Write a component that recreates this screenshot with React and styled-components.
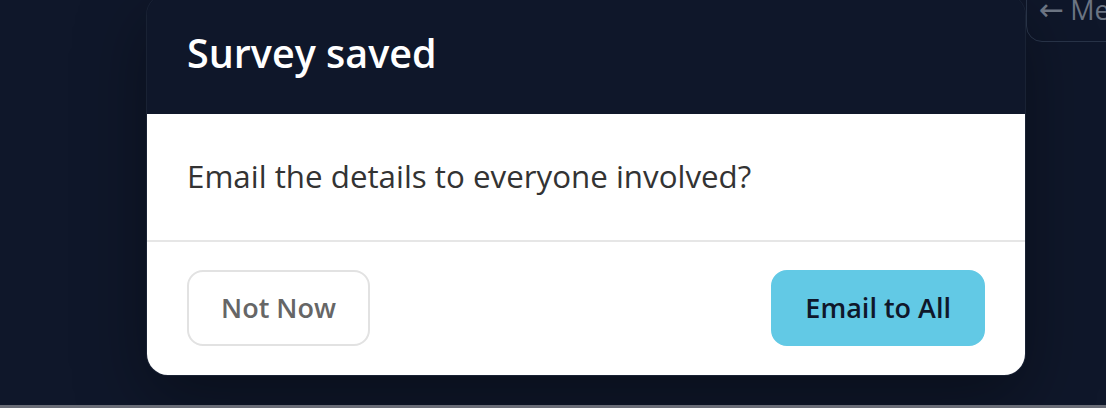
import React from "react";
import styled, { createGlobalStyle } from "styled-components";

const GlobalStyle = createGlobalStyle`
  html, body {
    margin: 0;
    padding: 0;
    height: 100%;
    overflow: hidden;
    background: #0f172a;
    font-family: "Open Sans", "Noto Sans", sans-serif;
  }
  * { box-sizing: border-box; }
`;

const Screen = styled.div`
  width: 1106px;
  height: 408px;
  display: flex;
  flex-direction: column;
  background: #0f172a;
  overflow: hidden;
`;

const Stage = styled.div`
  flex: 1;
  display: flex;
  align-items: flex-start;
  padding-left: 146px;
  min-height: 0;
`;

const BottomBar = styled.div`
  height: 3px;
  flex-shrink: 0;
  background: #6a6d77;
`;

const Modal = styled.div`
  width: 880px;
  flex-shrink: 0;
  margin-top: -7px;
  border-radius: 22px;
  border: 1px solid rgba(148, 163, 184, 0.08);
  overflow: hidden;
  box-shadow: 0 24px 70px rgba(0, 0, 0, 0.35);
  display: flex;
  flex-direction: column;
`;

const Header = styled.div`
  background: #0f172a;
  padding: 33px 40px 0;
  height: 120px;
`;

const Title = styled.h2`
  margin: 0;
  color: #ffffff;
  font-size: 39.5px;
  font-weight: 600;
  line-height: 52px;
`;

const Body = styled.div`
  background: #ffffff;
  padding: 36px 40px 38px;
  border-bottom: 2px solid #e6e6e6;
`;

const Message = styled.p`
  margin: 0;
  color: #333333;
  font-size: 31.3px;
  line-height: 52px;
`;

const Footer = styled.div`
  background: #ffffff;
  padding: 28px 40px 29px;
  display: flex;
  justify-content: space-between;
  align-items: center;
`;

const Button = styled.button`
  font-family: inherit;
  font-size: 27px;
  font-weight: 600;
  line-height: 36px;
  height: 76px;
  padding: 0 32px;
  border-radius: 16px;
  cursor: pointer;
  border: 2px solid ${(p) => (p.$primary ? "#62c9e5" : "#e2e2e2")};
  background: ${(p) => (p.$primary ? "#62c9e5" : "#ffffff")};
  color: ${(p) => (p.$primary ? "#0f172a" : "#666666")};
`;

const BackButton = styled.button`
  flex-shrink: 0;
  margin-top: -18px;
  padding: 10px 12px 14px;
  font-family: inherit;
  font-size: 27px;
  line-height: 34px;
  color: #6b7482;
  background: transparent;
  border: 1px solid #273246;
  border-radius: 16px;
  white-space: nowrap;
`;

const Arrow = styled.span`
  font-family: "DejaVu Sans", sans-serif;
  font-size: 30px;
  margin-right: 6px;
`;

export default function App() {
  return (
    <>
      <GlobalStyle />
      <Screen>
        <Stage>
          <Modal>
            <Header>
              <Title>Survey saved</Title>
            </Header>
            <Body>
              <Message>Email the details to everyone involved?</Message>
            </Body>
            <Footer>
              <Button>Not Now</Button>
              <Button $primary>Email to All</Button>
            </Footer>
          </Modal>
          <BackButton>
            <Arrow>←</Arrow>Menu
          </BackButton>
        </Stage>
        <BottomBar />
      </Screen>
    </>
  );
}
